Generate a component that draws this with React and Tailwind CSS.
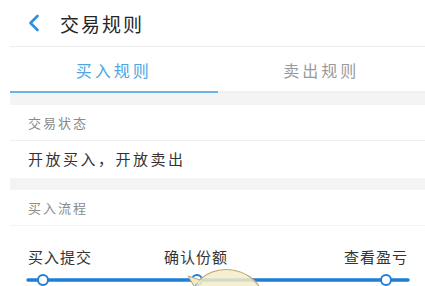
export default function App() {
  return (
    <div
      className="relative w-[425px] h-[286px] overflow-hidden bg-white"
      style={{ fontFamily: '"Noto Sans CJK SC", "Noto Sans", sans-serif' }}
    >
      {/* header */}
      <div className="flex h-[46px] items-center pl-[27px]">
        <svg width="14" height="20" viewBox="0 0 14 20" className="mr-[19px]">
          <path d="M10.5 3 L3.5 10 L10.5 17" fill="none" stroke="#2f8fdf" strokeWidth="2.6" strokeLinecap="round" strokeLinejoin="round" />
        </svg>
        <span className="text-[19px] leading-none tracking-[2px] text-[#262626]">交易规则</span>
      </div>
      <div className="ml-[10px] h-px bg-[#ededed]" />
      {/* tabs */}
      <div className="ml-[10px] flex h-[46px]">
        <div className="flex flex-1 items-center justify-center border-b-2 border-[#6cb4e6] pt-[1px]">
          <span className="text-[16px] tracking-[3px] text-[#4da5e2]">买入规则</span>
        </div>
        <div className="flex flex-1 items-center justify-center border-b-2 border-[#f0f0f0] pt-[1px]">
          <span className="text-[16px] tracking-[3px] text-[#9a9a9a]">卖出规则</span>
        </div>
      </div>
      <div className="ml-[10px] h-[12px] bg-[#f4f4f4]" />
      <div className="flex h-[35px] items-center pl-[28px]">
        <span className="text-[13px] tracking-[2px] text-[#8a8a8a]">交易状态</span>
      </div>
      <div className="ml-[10px] h-px bg-[#efefef]" />
      <div className="flex h-[37px] items-center pl-[28px]">
        <span className="text-[15px] tracking-[2.5px] text-[#333333]">开放买入，开放卖出</span>
      </div>
      <div className="ml-[10px] h-[12px] bg-[#f4f4f4]" />
      <div className="flex h-[35px] items-center pl-[28px]">
        <span className="text-[13px] tracking-[2px] text-[#8a8a8a]">买入流程</span>
      </div>
      <div className="ml-[10px] h-px bg-[#f3f3f3]" />
      {/* steps */}
      <div className="flex pl-[28px] pt-[20px]">
        <span className="w-[136px] text-[15px] tracking-[1px] text-[#333333]">买入提交</span>
        <span className="w-[180px] text-[15px] tracking-[1px] text-[#333333]">确认份额</span>
        <span className="text-[15px] tracking-[1px] text-[#333333]">查看盈亏</span>
      </div>
      <svg width="425" height="20" viewBox="0 0 425 20" className="block mt-[3px]">
        <line x1="28" y1="8" x2="408" y2="8" stroke="#1f7fd6" strokeWidth="3.5" strokeLinecap="round" />
        <circle cx="43" cy="8" r="5" fill="#ffffff" stroke="#1f7fd6" strokeWidth="2" />
        <circle cx="197" cy="8" r="5" fill="#ffffff" stroke="#1f7fd6" strokeWidth="2" />
        <circle cx="386" cy="8" r="5" fill="#ffffff" stroke="#1f7fd6" strokeWidth="2" />
      </svg>
      {/* cartoon overlay */}
      <svg width="90" height="24" viewBox="0 0 90 24" className="absolute left-[180px] top-[264px]">
        <path d="M14 24 C22 8 40 4 52 6 C66 8 76 16 80 24 Z" fill="#f4ecc8" fillOpacity="0.85" stroke="#b9a67a" strokeWidth="1.2" />
        <path d="M14 22 L8 12 L20 16" fill="#f4ecc8" stroke="#b9a67a" strokeWidth="1" />
      </svg>
    </div>
  );
}
